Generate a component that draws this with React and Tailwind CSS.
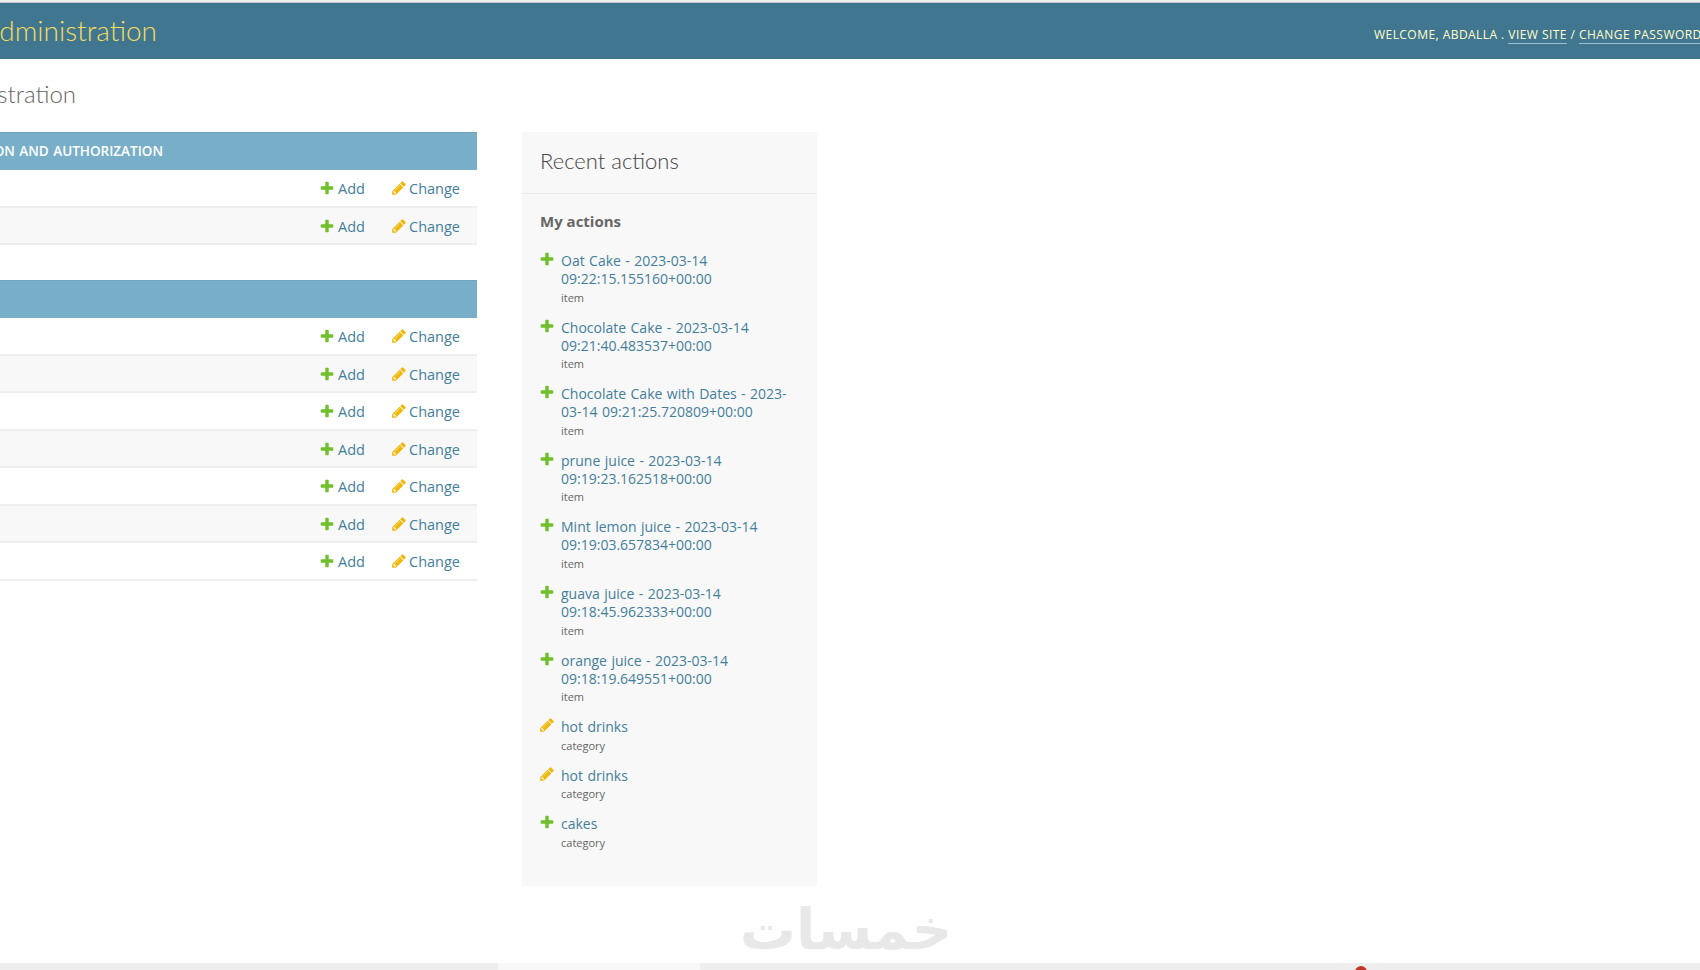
const ACTIONS = [
  { type: "add", lines: ["Oat Cake - 2023-03-14", "09:22:15.155160+00:00"], sub: "item" },
  { type: "add", lines: ["Chocolate Cake - 2023-03-14", "09:21:40.483537+00:00"], sub: "item" },
  { type: "add", lines: ["Chocolate Cake with Dates - 2023-", "03-14 09:21:25.720809+00:00"], sub: "item" },
  { type: "add", lines: ["prune juice - 2023-03-14", "09:19:23.162518+00:00"], sub: "item" },
  { type: "add", lines: ["Mint lemon juice - 2023-03-14", "09:19:03.657834+00:00"], sub: "item" },
  { type: "add", lines: ["guava juice - 2023-03-14", "09:18:45.962333+00:00"], sub: "item" },
  { type: "add", lines: ["orange juice - 2023-03-14", "09:18:19.649551+00:00"], sub: "item" },
  { type: "change", lines: ["hot drinks"], sub: "category" },
  { type: "change", lines: ["hot drinks"], sub: "category" },
  { type: "add", lines: ["cakes"], sub: "category" },
];

function AddIcon({ className }) {
  return (
    <svg viewBox="0 0 1792 1792" className={className} fill="#70bf2b">
      <path d="M1600 796v192q0 40-28 68t-68 28h-416v416q0 40-28 68t-68 28h-192q-40 0-68-28t-28-68v-416h-416q-40 0-68-28t-28-68v-192q0-40 28-68t68-28h416v-416q0-40 28-68t68-28h192q40 0 68 28t28 68v416h416q40 0 68 28t28 68z" />
    </svg>
  );
}

function ChangeIcon({ className }) {
  return (
    <svg viewBox="0 0 1792 1792" className={className} fill="#efb80b">
      <path d="M491 1536l91-91-235-235-91 91v107h128v128h107zm523-928q0-22-22-22-10 0-17 7l-542 542q-7 7-7 17 0 22 22 22 10 0 17-7l542-542q7-7 7-17zm-54-192l416 416-832 832h-416v-416zm683 96q0 53-37 90l-166 166-416-416 166-165q36-38 90-38 53 0 91 38l235 234q37 39 37 91z" />
    </svg>
  );
}

function Caption({ children }) {
  return (
    <div className="h-[38px] flex items-center w-full bg-[#79aec8] border-t border-[#6fa5c0]">
      <div className="w-[163px] flex justify-end overflow-hidden">
        <span className="whitespace-nowrap shrink-0 text-[13.5px] [word-spacing:1px] font-semibold text-white">{children}</span>
      </div>
    </div>
  );
}

function Row({ even }) {
  return (
    <div className={`h-[37.5px] flex items-center justify-end border-b-2 border-[#eeeeee] pr-[17px] pt-[2.5px] text-[14.5px] text-[#447e9b] ${even ? "bg-[#f8f8f8]" : "bg-white"}`}>
      <AddIcon className="w-[16px] h-[16px] mr-[3px] mt-[-2px]" />
      <span className="w-[26px]">Add</span>
      <ChangeIcon className="w-[16px] h-[16px] ml-[27px] mr-[2px] mt-[-2px]" />
      <span className="w-[51px]">Change</span>
    </div>
  );
}

function Action({ action }) {
  return (
    <li className="relative pl-[21px] mb-[14px]">
      {action.type === "add" ? (
        <AddIcon className="absolute left-[-1px] top-[-1px] w-[16px] h-[16px]" />
      ) : (
        <ChangeIcon className="absolute left-[-1px] top-[-1px] w-[16px] h-[16px]" />
      )}
      <div className="text-[14px] leading-[18px] [word-spacing:0.8px] text-[#447e9b] whitespace-nowrap">
        {action.lines.map((line) => (
          <div key={line}>{line}</div>
        ))}
      </div>
      <div className="text-[11px] leading-[14px] mt-[2.6px] text-[#666666]">{action.sub}</div>
    </li>
  );
}

export default function App() {
  return (
    <div className="relative w-[1700px] h-[970px] overflow-hidden flex flex-col bg-white font-['Open_Sans',sans-serif]">
      <div className="h-[2px] bg-[#f0f0f0]" />
      <div className="h-[1px] bg-[#c4c4c4]" />

      <header className="h-[56px] flex items-center bg-[#417690]">
        <div className="w-[157px] mt-[-3px] flex justify-end overflow-hidden">
          <span className="shrink-0 whitespace-nowrap text-[28px] font-['Lato',sans-serif] font-light text-[#f5dd5d]">Django administration</span>
        </div>
        <div className="ml-[1217px] w-[326px] mt-[7px] overflow-hidden whitespace-nowrap text-[12px] tracking-[0.45px] text-[#ffffcc]">
          WELCOME, <span className="font-medium">ABDALLA</span> .{" "}
          <span className="border-b border-[#9cc0d1]">VIEW SITE</span> /{" "}
          <span className="border-b border-[#9cc0d1]">CHANGE PASSWORD</span>
        </div>
      </header>

      <div className="flex-1 flex flex-col min-h-0">
        <div className="h-[73px] flex items-center">
          <div className="w-[76px] flex justify-end overflow-hidden mt-[-3px]">
            <span className="shrink-0 whitespace-nowrap text-[24px] font-['Lato',sans-serif] font-light text-[#666666]">Site administration</span>
          </div>
        </div>

        <div className="flex">
          <div className="w-[477px]">
            <Caption>AUTHENTICATION AND AUTHORIZATION</Caption>
            <Row />
            <Row even />
            <div className="h-[35px]" />
            <Caption />
            <Row />
            <Row even />
            <Row />
            <Row even />
            <Row />
            <Row even />
            <Row />
          </div>

          <aside className="ml-[45px] w-[295px] h-[754px] bg-[#f8f8f8]">
            <h2 className="h-[62px] flex items-center pl-[18px] pb-[4px] border-b border-[#eaeaea] text-[22px] font-['Lato',sans-serif] font-light text-[#444444]">Recent actions</h2>
            <div className="pl-[18px] pt-[16px]">
              <h3 className="text-[15px] leading-[22px] font-bold text-[#666666] mb-[20px]">My actions</h3>
              <ul>
                {ACTIONS.map((action, i) => (
                  <Action key={i} action={action} />
                ))}
              </ul>
            </div>
          </aside>
        </div>
      </div>

      {/* watermark */}
      <div dir="rtl" className="absolute left-[748px] top-[890px] w-[204px] text-center whitespace-nowrap text-[56px] leading-[80px] font-bold font-['DejaVu_Sans',sans-serif] text-[#e8e8e8]">خمسات</div>

      <div className="relative h-[7px] flex bg-[#eeeeee]">
        <div className="ml-[498px] w-[202px] bg-[#f8f8f8]" />
        <div className="absolute left-[1355px] top-[3px] w-[12px] h-[12px] rounded-full bg-[#c0392b]" />
      </div>
    </div>
  );
}
